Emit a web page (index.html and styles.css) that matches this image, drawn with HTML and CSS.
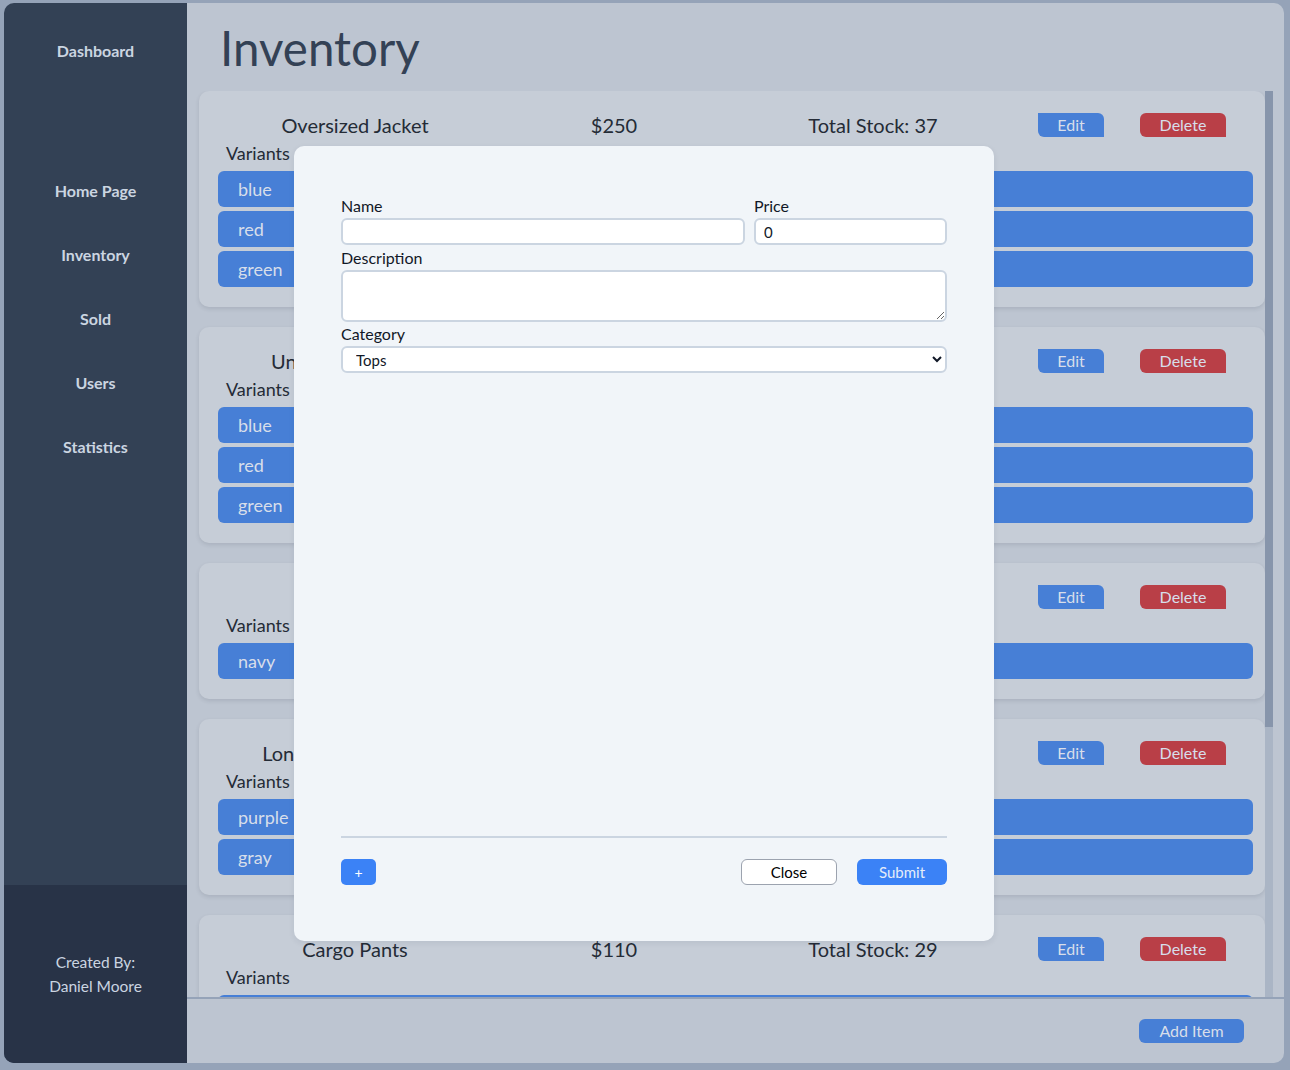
FILE: index.html
```html
<!DOCTYPE html>
<html lang="en">
<head>
<meta charset="utf-8">
<title>Inventory</title>
<link rel="stylesheet" href="styles.css">
</head>
<body>
<div class="app">
  <aside class="sidebar">
    <nav class="nav">
      <div class="brand">Dashboard</div>
      <ul class="menu">
        <li>Home Page</li>
        <li>Inventory</li>
        <li>Sold</li>
        <li>Users</li>
        <li>Statistics</li>
      </ul>
    </nav>
    <div class="credit">
      <p>Created By:</p>
      <p>Daniel Moore</p>
    </div>
  </aside>
  <main class="main">
    <header class="header"><h1>Inventory</h1></header>
    <div class="list-wrap">
      <section class="list">
        <article class="card">
          <div class="card-head">
            <span class="cell">Oversized Jacket</span>
            <span class="cell">$250</span>
            <span class="cell">Total Stock: 37</span>
            <div class="actions"><button class="btn-edit">Edit</button><button class="btn-delete">Delete</button></div>
          </div>
          <div class="variants-label">Variants</div>
          <div class="variants">
            <div class="variant">blue</div>
            <div class="variant">red</div>
            <div class="variant">green</div>
          </div>
        </article>
        <article class="card">
          <div class="card-head">
            <span class="cell">Unisex Graphic Tee</span>
            <span class="cell">$45</span>
            <span class="cell">Total Stock: 52</span>
            <div class="actions"><button class="btn-edit">Edit</button><button class="btn-delete">Delete</button></div>
          </div>
          <div class="variants-label">Variants</div>
          <div class="variants">
            <div class="variant">blue</div>
            <div class="variant">red</div>
            <div class="variant">green</div>
          </div>
        </article>
        <article class="card">
          <div class="card-head">
            <span class="cell">Beanie</span>
            <span class="cell">$20</span>
            <span class="cell">Total Stock: 14</span>
            <div class="actions"><button class="btn-edit">Edit</button><button class="btn-delete">Delete</button></div>
          </div>
          <div class="variants-label">Variants</div>
          <div class="variants">
            <div class="variant">navy</div>
          </div>
        </article>
        <article class="card">
          <div class="card-head">
            <span class="cell">Long Sleeve Tee Shirt</span>
            <span class="cell">$60</span>
            <span class="cell">Total Stock: 21</span>
            <div class="actions"><button class="btn-edit">Edit</button><button class="btn-delete">Delete</button></div>
          </div>
          <div class="variants-label">Variants</div>
          <div class="variants">
            <div class="variant">purple</div>
            <div class="variant">gray</div>
          </div>
        </article>
        <article class="card">
          <div class="card-head">
            <span class="cell">Cargo Pants</span>
            <span class="cell">$110</span>
            <span class="cell">Total Stock: 29</span>
            <div class="actions"><button class="btn-edit">Edit</button><button class="btn-delete">Delete</button></div>
          </div>
          <div class="variants-label">Variants</div>
          <div class="variants">
            <div class="variant variant-cut"></div>
          </div>
        </article>
      </section>
      <div class="scrollbar"><div class="thumb"></div></div>
    </div>
    <footer class="footer"><button class="btn-add">Add Item</button></footer>
  </main>
</div>

<div class="modal">
  <form class="form">
    <div class="row-two">
      <div class="field">
        <label class="label">Name</label>
        <input class="input" type="text" value="">
      </div>
      <div class="field">
        <label class="label">Price</label>
        <input class="input" type="text" value="0">
      </div>
    </div>
    <div class="field field-desc">
      <label class="label">Description</label>
      <textarea class="textarea"></textarea>
    </div>
    <div class="field field-cat">
      <label class="label">Category</label>
      <select class="select"><option>Tops</option><option>Bottoms</option></select>
    </div>
  </form>
  <div class="modal-foot">
    <button class="btn-plus">+</button>
    <div class="foot-right">
      <button class="btn-close">Close</button>
      <button class="btn-submit">Submit</button>
    </div>
  </div>
</div>
</body>
</html>
```

FILE: styles.css
```css
* { box-sizing: border-box; }

html, body {
  margin: 0;
  padding: 0;
  height: 100%;
}

body {
  background: #95a3b8;
  font-family: Lato, "Noto Sans", sans-serif;
  overflow: hidden;
  position: relative;
}

.app {
  margin: 3px 6px 7px 4px;
  height: 1060px;
  display: flex;
  border-radius: 10px;
  overflow: hidden;
}

/* Sidebar */
.sidebar {
  width: 183px;
  background: #334155;
  display: flex;
  flex-direction: column;
  color: #cbd5e1;
}

.nav {
  flex: 1;
}

.brand {
  padding-top: 38px;
  font-weight: 700;
  font-size: 16px;
  line-height: 20px;
  text-align: center;
}

.menu {
  list-style: none;
  margin: 0;
  padding: 98px 0 0;
}

.menu li {
  height: 64px;
  line-height: 64px;
  text-align: center;
  font-weight: 700;
  font-size: 16px;
}

.credit {
  height: 178px;
  background: #283347;
  display: flex;
  flex-direction: column;
  justify-content: center;
  align-items: center;
  font-size: 15.5px;
}

.credit p {
  margin: 0;
  line-height: 24px;
}

/* Main */
.main {
  flex: 1;
  background: #bdc5d1;
  display: flex;
  flex-direction: column;
  min-width: 0;
}

.header {
  height: 88px;
  padding: 15px 0 0 33px;
}

.header h1 {
  margin: 0;
  font-weight: 400;
  font-size: 47.5px;
  line-height: 60px;
  color: #334155;
}

.list-wrap {
  flex: 1;
  min-height: 0;
  display: flex;
  margin-right: 11px;
}

.list {
  flex: 1;
  min-width: 0;
  overflow: hidden;
  padding-left: 12px;
}

.scrollbar {
  width: 8px;
  flex: none;
  background: #aab5c5;
}

.thumb {
  height: 636px;
  background: #8795ab;
}

.card {
  background: #c6cdd7;
  border-radius: 10px;
  box-shadow: 0 2px 4px rgba(30, 41, 59, 0.12);
  padding: 22px 12px 20px 19px;
  margin-bottom: 20px;
  color: #242b36;
}

.card-head {
  display: grid;
  grid-template-columns: 274px 244px 274px 1fr;
  align-items: center;
  height: 24px;
}

.cell {
  text-align: center;
  font-size: 20px;
  line-height: 24px;
  white-space: nowrap;
}

.actions {
  display: flex;
  gap: 36px;
  padding-left: 28px;
}

.btn-edit,
.btn-delete,
.btn-add {
  border: none;
  height: 24px;
  font-family: inherit;
  font-size: 16px;
  line-height: 24px;
  color: #d7deea;
  padding: 0;
}

.btn-edit {
  width: 66px;
  background: #477fd6;
  border-radius: 0 6px 0 6px;
}

.btn-delete {
  width: 86px;
  background: #b93f47;
  border-radius: 6px 6px 0 6px;
}

.variants-label {
  margin: 3px 0 5px 8px;
  font-size: 18px;
  line-height: 26px;
}

.variants {
  display: flex;
  flex-direction: column;
  gap: 4px;
}

.variant {
  height: 36px;
  line-height: 36px;
  padding-left: 20px;
  font-size: 18px;
  background: #477fd6;
  color: #d7deea;
  border-radius: 6px;
}

.footer {
  height: 66px;
  border-top: 2px solid #95a3b8;
  display: flex;
  justify-content: flex-end;
  align-items: flex-start;
  padding: 20px 40px 0 0;
}

.btn-add {
  width: 105px;
  background: #477fd6;
  border-radius: 6px;
}

/* Modal */
.modal {
  position: absolute;
  left: 294px;
  top: 146px;
  width: 700px;
  height: 795px;
  background: #f1f5f9;
  border-radius: 10px;
  padding: 50px 47px 56px;
  display: flex;
  flex-direction: column;
  justify-content: space-between;
  box-shadow: 0 2px 6px rgba(30, 41, 59, 0.08);
}

.form {
  margin: 0;
}

.row-two {
  display: grid;
  grid-template-columns: 1fr 193px;
  gap: 9px;
}

.field {
  display: flex;
  flex-direction: column;
}

.label {
  font-size: 16px;
  line-height: 20px;
  margin-bottom: 2px;
  color: #111827;
}

.field-desc {
  margin-top: 3px;
}

.field-cat {
  margin-top: 2px;
}

.input,
.textarea,
.select {
  border: 2px solid #cbd5e1;
  border-radius: 6px;
  background: #ffffff;
  font-family: inherit;
  font-size: 15px;
  color: #111827;
  outline: none;
}

.input {
  height: 27px;
  padding: 0 8px;
}

.textarea {
  height: 52px;
  resize: vertical;
  padding: 4px 8px;
}

.select {
  height: 27px;
  padding: 0 6px 0 9px;
}

.modal-foot {
  border-top: 2px solid #cbd5e1;
  padding-top: 21px;
  display: flex;
  justify-content: space-between;
  align-items: center;
}

.foot-right {
  display: flex;
  gap: 20px;
}

.btn-plus,
.btn-close,
.btn-submit {
  height: 26px;
  font-family: inherit;
  font-size: 15px;
  padding: 0;
}

.btn-plus {
  width: 35px;
  border: none;
  border-radius: 5px;
  background: #3b82f6;
  color: #ffffff;
  font-size: 14px;
}

.btn-close {
  width: 96px;
  border: 1px solid #9ca3af;
  border-radius: 6px;
  background: #ffffff;
  color: #000000;
}

.btn-submit {
  width: 90px;
  border: none;
  border-radius: 6px;
  background: #3b82f6;
  color: #e5edf9;
}
```
